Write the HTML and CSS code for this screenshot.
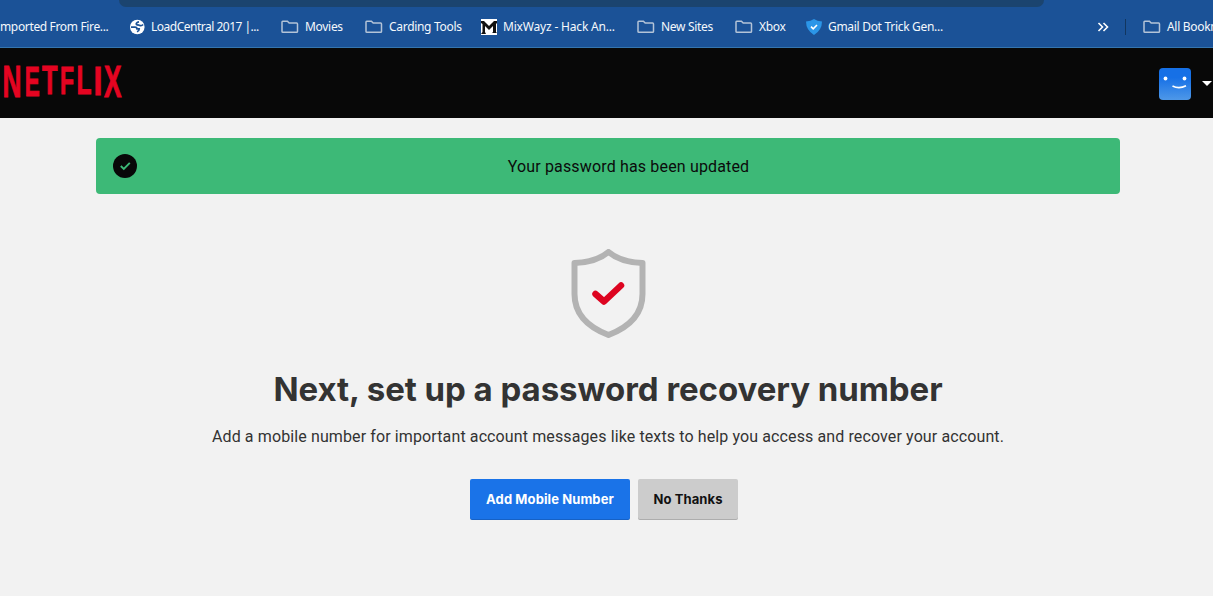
FILE: index.html
```
<!DOCTYPE html>
<html lang="en">
<head>
    <meta charset="UTF-8">
    <meta name="viewport" content="width=device-width, initial-scale=1.0">
    <title>Netflix</title>
    <link rel="stylesheet" href="styles.css">
</head>
<body>

<svg class="defs" width="0" height="0">
    <symbol id="folder" viewBox="0 0 18 14">
        <path d="M1.8 1.2h4.6l1.8 1.9h7.4q.9 0 .9.9v7.4q0 .9-.9.9H1.900q-.9 0-.9-.9V2.100q0-.9.8-.9z" fill="none" stroke="#b4c4d8" stroke-width="1.5"/>
    </symbol>
</svg>

<div class="browser">
    <div class="address-bar"></div>
    <div class="bookmarks">
        <div class="bookmark"><span class="imported">mported From Fire...</span></div>
        <div class="bookmark">
            <svg class="icon globe" viewBox="0 0 16 16">
                <circle cx="7.300" cy="8" r="7.300" fill="#fff"/>
                <path d="M1 8.200h4q2 0 2 1.700h2.200q0 2-2.200 2.800M13.200 5.500q-1.700 1.700-3.400.9T7.300 6q-1.600-.6-.8-1.800T9 2.800" fill="none" stroke="#1b5297" stroke-width="1.700"/>
            </svg>
            <span class="load">LoadCentral 2017 |...</span>
        </div>
        <div class="bookmark"><svg class="folder"><use href="#folder"/></svg><span class="movies">Movies</span></div>
        <div class="bookmark"><svg class="folder"><use href="#folder"/></svg><span class="carding">Carding Tools</span></div>
        <div class="bookmark">
            <svg class="icon" viewBox="0 0 16 16">
                <rect width="16" height="16" fill="#fff"/>
                <path d="M0 2h3l5 5 5-5h3v2l-1 1v8l1 1h-5l1-1V7L8 11 4 7v6l1 2H0l1.500-2V5L0 4z" fill="#111"/>
                <path d="M5 4l3 3 3-3" fill="none" stroke="#888" stroke-width="1"/>
            </svg>
            <span class="mix">MixWayz - Hack An...</span>
        </div>
        <div class="bookmark"><svg class="folder"><use href="#folder"/></svg><span class="sites">New Sites</span></div>
        <div class="bookmark"><svg class="folder"><use href="#folder"/></svg><span class="xbox">Xbox</span></div>
        <div class="bookmark">
            <svg class="icon" viewBox="0 0 16 16">
                <path d="M8 0q3 2.300 8 2.500Q16 11 8 16 0 11 0 2.500 5 2.300 8 0z" fill="#2b96e8"/>
                <path d="M5 7.600l2.200 2.200L11 6" fill="none" stroke="#fff" stroke-width="1.600"/>
            </svg>
            <span class="gmail">Gmail Dot Trick Gen...</span>
        </div>
        <div class="bookmark">
            <svg class="more" viewBox="0 0 12 10"><path d="M1.500 1l4 4-4 4M6.500 1l4 4-4 4" fill="none" stroke="#fff" stroke-width="1.600"/></svg>
        </div>
        <div class="bookmark"><span class="divider"></span></div>
        <div class="bookmark"><svg class="folder"><use href="#folder"/></svg><span class="all">All Bookmarks</span></div>
    </div>
</div>

<header class="header">
    <svg class="logo" viewBox="0 0 130 70">
        <text x="2.500" y="49" font-size="44" textLength="19" lengthAdjust="spacingAndGlyphs">N</text>
        <text x="24.700" y="47.500" font-size="42" textLength="15" lengthAdjust="spacingAndGlyphs">E</text>
        <text x="42" y="46.200" font-size="40" textLength="15.500" lengthAdjust="spacingAndGlyphs">T</text>
        <text x="60" y="45.700" font-size="39" textLength="14" lengthAdjust="spacingAndGlyphs">F</text>
        <text x="76.500" y="46.200" font-size="40" textLength="15" lengthAdjust="spacingAndGlyphs">L</text>
        <text x="93.500" y="47.200" font-size="41.500" textLength="9" lengthAdjust="spacingAndGlyphs">I</text>
        <text x="104" y="49" font-size="44" textLength="17.500" lengthAdjust="spacingAndGlyphs">X</text>
    </svg>
    <div class="profile">
        <svg class="avatar" viewBox="0 0 32 32">
            <circle cx="6.500" cy="10.500" r="1.900" fill="#fff"/>
            <circle cx="25.500" cy="10.500" r="1.900" fill="#fff"/>
            <path d="M13.500 18q6.500 3.300 13.500-.2" fill="none" stroke="#fff" stroke-width="1.600"/>
        </svg>
        <span class="caret"></span>
    </div>
</header>

<main class="content">
    <div class="alert">
        <svg class="alert-icon" viewBox="0 0 24 24">
            <circle cx="12" cy="12" r="12" fill="#080808"/>
            <path d="M7.800 12l3 3 6-6.200" fill="none" stroke="#3db977" stroke-width="1.900"/>
        </svg>
        <p class="alert-text">Your password has been updated</p>
    </div>

    <svg class="shield" viewBox="0 0 76 90">
        <path d="M38.500 3Q51 13.500 72.500 14v31q0 28-34 41Q4.500 73 4.500 45V14q21.500-.5 34-11z" fill="none" stroke="#b3b3b3" stroke-width="6" stroke-linejoin="round"/>
        <path d="M25.500 45l8.500 7.500L51 36.500" fill="none" stroke="#dd0420" stroke-width="6.500" stroke-linecap="round" stroke-linejoin="round"/>
    </svg>

    <h1 class="title">Next, set up a password recovery number</h1>
    <p class="description">Add a mobile number for important account messages like texts to help you access and recover your account.</p>

    <div class="buttons">
        <button class="btn btn-blue">Add Mobile Number</button>
        <button class="btn btn-gray">No Thanks</button>
    </div>
</main>

</body>
</html>
```

FILE: styles.css
```
* {
    box-sizing: border-box;
}

body {
    margin: 0;
    height: 596px;
    overflow: hidden;
    background-color: #f2f2f2;
    font-family: Roboto, sans-serif;
    color: #333;
}

.defs {
    display: block;
}

/* browser toolbar */
.browser {
    height: 48px;
    background-color: #1b5297;
    border-bottom: 1px solid #3575ae;
}

.address-bar {
    width: 925px;
    height: 7px;
    margin-left: 119px;
    background-color: #1b446f;
    border-radius: 0 0 12px 12px;
}

.bookmarks {
    display: grid;
    grid-template-columns: 130px 151px 84px 116px 156px 98px 71px 291px 28px 18px 120px;
    height: 39px;
    align-items: center;
    font-family: "Noto Sans", sans-serif;
    font-size: 12px;
    letter-spacing: -0.3px;
    color: #f4f8fc;
}

.bookmark {
    display: flex;
    align-items: center;
    white-space: nowrap;
}

.folder {
    width: 18px;
    height: 14px;
    margin-right: 6px;
}

.icon {
    width: 16px;
    height: 16px;
    margin-right: 6px;
}

.globe {
    margin-right: 5px;
}

.imported {
    letter-spacing: -0.35px;
}

.load {
    letter-spacing: -0.5px;
}

.mix {
    letter-spacing: -0.18px;
}

.more {
    width: 12px;
    height: 10px;
}

.divider {
    width: 1px;
    height: 16px;
    background-color: #12365f;
}

/* netflix header */
.header {
    display: flex;
    justify-content: space-between;
    height: 70px;
    background-color: #080808;
}

.logo {
    width: 130px;
    height: 70px;
    font-family: "Liberation Sans", sans-serif;
    font-weight: bold;
    fill: #e50421;
    stroke: #e50421;
    stroke-width: 0.9px;
}

.profile {
    display: flex;
    align-items: center;
    height: 32px;
    margin-top: 20px;
}

.avatar {
    width: 32px;
    height: 32px;
    margin-right: 11px;
    border-radius: 4px;
    background: linear-gradient(#1670e6 30%, #4e98e8);
}

.caret {
    border: 5px solid transparent;
    border-top-color: #fff;
    border-bottom: 0;
    margin: -2px 1px 0 0;
}

/* page content */
.content {
    display: flex;
    flex-direction: column;
    align-items: center;
    width: 1024px;
    margin: 20px 0 0 96px;
}

.alert {
    display: flex;
    align-items: center;
    width: 100%;
    height: 56px;
    padding: 0 17px;
    background-color: #3db977;
    border-radius: 4px;
}

.alert-icon {
    width: 24px;
    height: 24px;
}

.alert-text {
    flex: 1;
    margin: 0 0 0 17px;
    text-align: center;
    font-size: 16px;
    color: #0b0b0b;
    letter-spacing: 0.16px;
}

.shield {
    width: 76px;
    height: 90px;
    margin-top: 55px;
}

.title {
    margin: 29px 0 0;
    font-family: Inter, sans-serif;
    font-size: 33px;
    line-height: 42px;
    letter-spacing: -0.05px;
    white-space: nowrap;
}

.description {
    margin: 15px 0 0;
    font-size: 16px;
    line-height: 24px;
    letter-spacing: 0.115px;
    white-space: nowrap;
}

.buttons {
    display: flex;
    gap: 8px;
    margin: 30px 8px 0 0;
}

.btn {
    height: 41px;
    padding: 0 0 2px;
    border: none;
    border-radius: 2px;
    font-family: Inter, sans-serif;
    font-size: 13px;
    font-weight: bold;
    letter-spacing: 0.1px;
    box-shadow: inset 0 -1px 0 rgba(0, 0, 0, 0.15);
}

.btn-blue {
    width: 160px;
    background-color: #1a73e8;
    color: #fff;
}

.btn-gray {
    width: 100px;
    background-color: #ccc;
    color: #111;
}
```
